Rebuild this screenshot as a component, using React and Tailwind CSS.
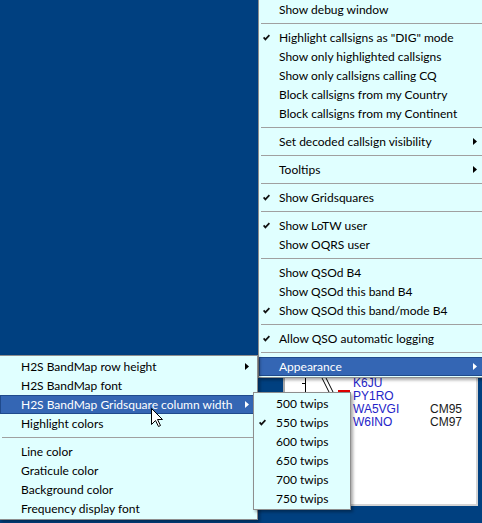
import React from "react";

const mainItems = [
  { label: "Show debug window" },
  { sep: true },
  { label: 'Highlight callsigns as "DIG" mode', checked: true },
  { label: "Show only highlighted callsigns" },
  { label: "Show only callsigns calling CQ" },
  { label: "Block callsigns from my Country" },
  { label: "Block callsigns from my Continent" },
  { sep: true },
  { label: "Set decoded callsign visibility", arrow: true },
  { sep: true },
  { label: "Tooltips", arrow: true },
  { sep: true },
  { label: "Show Gridsquares", checked: true },
  { sep: true },
  { label: "Show LoTW user", checked: true },
  { label: "Show OQRS user" },
  { sep: true },
  { label: "Show QSOd B4" },
  { label: "Show QSOd this band B4" },
  { label: "Show QSOd this band/mode B4", checked: true },
  { sep: true },
  { label: "Allow QSO automatic logging", checked: true },
  { sep: true },
  { label: "Appearance", arrow: true, active: true },
];

const appearanceItems = [
  { label: "H2S BandMap row height", arrow: true },
  { label: "H2S BandMap font" },
  { label: "H2S BandMap Gridsquare column width", arrow: true, active: true },
  { label: "Highlight colors" },
  { sep: true },
  { label: "Line color" },
  { label: "Graticule color" },
  { label: "Background color" },
  { label: "Frequency display font" },
];

const twipsItems = [
  { label: "500 twips" },
  { label: "550 twips", checked: true },
  { label: "600 twips" },
  { label: "650 twips" },
  { label: "700 twips" },
  { label: "750 twips" },
];

const callsigns = [
  { call: "K6JU", grid: "" },
  { call: "PY1RO", grid: "" },
  { call: "WA5VGI", grid: "CM95" },
  { call: "W6INO", grid: "CM97" },
];

function Check() {
  return (
    <svg width="7" height="7" viewBox="0 0 7 7" className="block">
      <polyline
        points="0.6,3.4 2.4,5.4 6.4,1.2"
        fill="none"
        stroke="#111111"
        strokeWidth="1.7"
      />
    </svg>
  );
}

function Arrow({ white }) {
  return (
    <svg width="4" height="7" viewBox="0 0 4 7" className="block">
      <polygon points="0,0 4,3.5 0,7" fill={white ? "#ffffff" : "#000000"} />
    </svg>
  );
}

function MenuItem({ item, checkCol }) {
  if (item.sep) {
    return (
      <div className="h-[9px] flex items-center pl-[2px] pr-[3px]">
        <div className="h-px w-full bg-[#a0a0a0]" />
      </div>
    );
  }
  return (
    <div
      className={`h-[19px] flex items-center border ${
        item.active
          ? "bg-[#3466b4] border-[#1f4a8c] text-white"
          : "border-transparent text-black"
      }`}
    >
      <div
        className="h-full flex items-center justify-center pr-[6px] shrink-0"
        style={{ width: checkCol }}
      >
        {item.checked && <Check />}
      </div>
      <span className="flex-1 whitespace-nowrap leading-none mt-px">{item.label}</span>
      <div className="w-[4px] mr-[7px] shrink-0">
        {item.arrow && <Arrow white={item.active} />}
      </div>
    </div>
  );
}

function Menu({ items, className, checkCol = 19 }) {
  return (
    <div
      className={`absolute bg-[#e0ffff] border border-[#8e8e8e] py-[1px] shadow-[2px_2px_3px_rgba(0,0,0,0.35)] ${className}`}
    >
      {items.map((item, i) => (
        <MenuItem key={i} item={item} checkCol={checkCol} />
      ))}
    </div>
  );
}

function Cursor() {
  return (
    <svg
      width="13"
      height="20"
      viewBox="0 0 13 20"
      className="absolute left-[151px] top-[408px]"
    >
      <polygon
        points="0.5,0.5 0.5,16.5 4.5,12.5 7.5,18.5 9.5,17.5 6.5,11.5 11.5,11.5"
        fill="#ffffff"
        stroke="#000000"
        strokeWidth="1"
      />
    </svg>
  );
}

export default function App() {
  return (
    <div className="relative w-[482px] h-[523px] overflow-hidden bg-[#004080] text-[12px] font-['Lato',sans-serif]">
      {/* bandmap window behind the menus */}
      <div className="absolute left-[283px] top-[356px] w-[195px] h-[150px] bg-white border-2 border-[#a9a9a9] border-r-[#d4d4d4] border-b-[#d4d4d4]">
        <svg width="80" height="40" className="absolute left-0 top-0">
          <line x1="20.5" y1="10" x2="20.5" y2="40" stroke="#000" />
          <line x1="17" y1="25.5" x2="20" y2="25.5" stroke="#000" />
          <line x1="36" y1="18" x2="46" y2="38" stroke="#000" />
          <line x1="40" y1="18" x2="50" y2="38" stroke="#000" />
          <line x1="44" y1="19" x2="48" y2="19" stroke="#000" />
          <rect x="53" y="32" width="12" height="6" fill="#e00000" />
        </svg>
        <div className="pt-[19px] pl-[68px] font-['Liberation_Sans',Arial,sans-serif] text-[12px] leading-[13px]">
          {callsigns.map((c) => (
            <div key={c.call} className="flex">
              <span className="w-[77px] text-[#2424c8]">{c.call}</span>
              <span className="text-[#1a1a1a]">{c.grid}</span>
            </div>
          ))}
        </div>
      </div>

      <Menu items={mainItems} className="left-[258px] top-[-2px] w-[228px]" />
      <Menu items={appearanceItems} className="left-[-1px] top-[355px] w-[259px]" checkCol={20} />
      <Menu items={twipsItems} className="left-[253px] top-[392px] w-[98px]" checkCol={21} />
      <Cursor />
    </div>
  );
}
